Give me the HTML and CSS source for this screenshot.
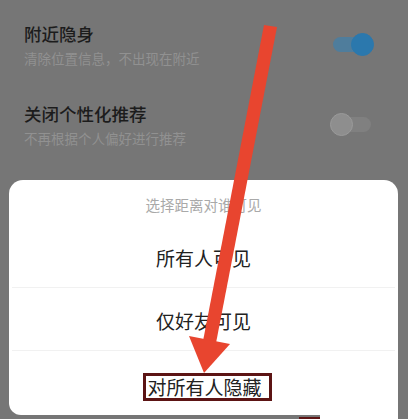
FILE: index.html
```html
<!DOCTYPE html>
<html lang="zh-CN">
<head>
    <meta charset="UTF-8">
    <meta name="viewport" content="width=device-width, initial-scale=1.0">
    <title>隐私设置</title>
    <link rel="stylesheet" href="styles.css">
</head>
<body>
    <div class="settings">
        <div class="setting-row">
            <div class="setting-text">
                <div class="setting-title">附近隐身</div>
                <div class="setting-desc">清除位置信息，不出现在附近</div>
            </div>
            <div class="toggle on">
                <span class="track"></span>
                <span class="knob"></span>
            </div>
        </div>
        <div class="setting-row second">
            <div class="setting-text">
                <div class="setting-title">关闭个性化推荐</div>
                <div class="setting-desc">不再根据个人偏好进行推荐</div>
            </div>
            <div class="toggle">
                <span class="track"></span>
                <span class="knob"></span>
            </div>
        </div>
    </div>

    <div class="sheet">
        <div class="sheet-title">选择距离对谁可见</div>
        <div class="sheet-option">所有人可见</div>
        <div class="sheet-option">仅好友可见</div>
        <div class="sheet-option last"><span class="picked">对所有人隐藏</span></div>
    </div>

    <!-- bits of the bottom edge left over from the crop -->
    <div class="edge-white"></div>
    <div class="edge-red"></div>

    <!-- red pointer drawn on top -->
    <svg class="pointer" width="408" height="419" viewBox="0 0 408 419">
        <polygon points="264,25 277,27 216,343 203,341" fill="#e8452f"/>
        <polygon points="189,336 230,344 204,373" fill="#e8452f"/>
    </svg>
</body>
</html>
```

FILE: styles.css
```css
body {
    margin: 0;
    width: 408px;
    height: 419px;
    overflow: hidden;
    position: relative;
    background-color: #767676; /* dimmed page behind the sheet */
    font-family: "Noto Sans CJK SC", "Noto Sans", sans-serif;
}

.settings {
    padding-top: 22px;
    height: 180px;
    box-sizing: border-box;
}

.setting-row {
    display: flex;
    align-items: center;
    justify-content: space-between;
    padding-left: 24px;
    padding-right: 34px;
}

.setting-row.second {
    margin-top: 35px;
}

.setting-title {
    font-size: 17.5px;
    font-weight: 500;
    line-height: 24px;
    color: #1c1c1c;
    margin-bottom: 3px;
}

.setting-desc {
    font-size: 13.5px;
    line-height: 18px;
    color: #919191;
}

/* switches */
.toggle {
    position: relative;
    width: 44px;
    height: 22px;
    display: flex;
    align-items: center;
}

.toggle.on {
    justify-content: flex-end;
}

.track {
    position: absolute;
    left: 3px;
    right: 3px;
    height: 15px;
    border-radius: 8px;
    background-color: #808080;
}

.knob {
    position: relative;
    width: 23px;
    height: 23px;
    border-radius: 50%;
    box-sizing: border-box;
    background-color: #8e8e8e;
    border: 1px solid #9a9a9a;
}

.toggle.on .track {
    background-color: #4f7d9c;
}

.toggle.on .knob {
    background-color: #2b78ad;
    border-color: #2b78ad;
}

/* bottom sheet */
.sheet {
    margin-left: 9px;
    width: 389px;
    height: 235px;
    background-color: #fff;
    border-radius: 14px 14px 0 12px;
    text-align: center;
    padding: 0 3px;
    box-sizing: border-box;
}

.sheet-title {
    height: 45px;
    padding-top: 15px;
    box-sizing: border-box;
    font-size: 14.5px;
    line-height: 20px;
    color: #a9a9a9;
}

.sheet-option {
    height: 63px;
    box-sizing: border-box;
    padding-top: 20px;
    font-size: 19px;
    line-height: 26px;
    color: #222;
    border-bottom: 1px solid #f1f1f1;
}

.sheet-option.last {
    border-bottom: none;
    padding-top: 22px;
}

.picked {
    display: inline-block;
    line-height: 22px;
    padding: 0 7px 0 1px;
    margin-left: 8px;
    border: 3px solid #5c1414;
}

.edge-white {
    position: absolute;
    left: 320px;
    top: 415px;
    width: 78px;
    height: 4px;
    background-color: #fff;
}

.edge-red {
    position: absolute;
    left: 299px;
    top: 417px;
    width: 21px;
    height: 2px;
    background-color: #5c1414;
}

.pointer {
    position: absolute;
    top: 0;
    left: 0;
    pointer-events: none;
}
```
